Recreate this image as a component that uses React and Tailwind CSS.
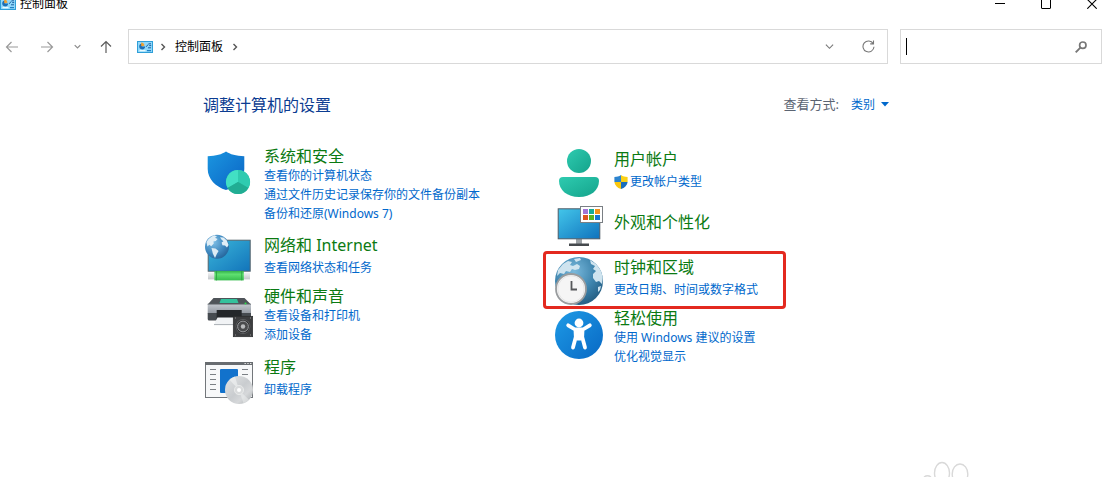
import { useState } from 'react';

function PanelIcon() {
  return (
    <svg width="16" height="12" viewBox="0 0 16 12" aria-hidden="true" className="shrink-0">
      <rect x="0.5" y="0.5" width="15" height="11" fill="#8fd8fb" stroke="#2f9fd8" />
      <path d="M5.2 2.4A3 3 0 1 0 8.2 5.6H5.2Z" fill="#1d6fb5" />
      <path d="M4.2 1.6A3 3 0 0 1 7.4 4.8L4.2 5.2Z" fill="#f0a030" />
      <path d="M9.2 5.8 11.2 3.4M11.5 2.8h2.5M12.2 4.6h2M11 6.8h3" stroke="#1c5f9e" strokeWidth="1" />
      <path d="M2.5 9.6h6" stroke="#e9fbff" strokeWidth="1.4" />
      <path d="M10 9.6h4" stroke="#1f7fc4" strokeWidth="1.2" />
    </svg>
  );
}

function Chevron({ dir = 'right', size = 8, color = '#555', width = 1.4 }) {
  return (
    <svg width={size} height={size} viewBox="0 0 8 8" fill="none" stroke={color} strokeWidth={width} aria-hidden="true">
      <path d={dir === 'right' ? 'M2.5 1 5.5 4 2.5 7' : 'M0.8 2.4 4 5.6 7.2 2.4'} />
    </svg>
  );
}

function Arrow({ d, color }) {
  return (
    <svg width="14" height="14" viewBox="0 0 14 14" fill="none" stroke={color} strokeWidth="1.2" aria-hidden="true">
      <path d={d} />
    </svg>
  );
}

function UacShield() {
  return (
    <svg width="14" height="14" viewBox="0 0 14 14" aria-hidden="true" className="shrink-0">
      <path d="M7 0C5 1.4 3 1.9 0.4 2V7H7Z" fill="#2d84cf" />
      <path d="M7 0C9 1.4 11 1.9 13.6 2V7H7Z" fill="#fbd116" />
      <path d="M0.4 7C0.7 10.4 3.2 12.8 7 14V7Z" fill="#fbc80f" />
      <path d="M13.6 7C13.3 10.4 10.8 12.8 7 14V7Z" fill="#1c6ebb" />
    </svg>
  );
}

function SecurityIcon() {
  return (
    <svg width="48" height="48" viewBox="0 0 48 48" aria-hidden="true">
      <defs>
        <linearGradient id="sec" x1="0" y1="0" x2="1" y2="1">
          <stop offset="0" stopColor="#1b96e0" />
          <stop offset="1" stopColor="#0a63c4" />
        </linearGradient>
      </defs>
      <path d="M21 2.6C25 5.4 31 7 39.3 7.2V20C39.3 30 31 38 21 41C11 38 2.7 30 2.7 20V7.2C11 7 17 5.4 21 2.6Z" fill="url(#sec)" />
      <circle cx="33" cy="33" r="12" fill="#27b99d" />
      <path d="M33 33V21A12 12 0 0 0 22.6 39Z" fill="#42e0c4" />
      <path d="M33 33V21A12 12 0 0 1 43.4 39Z" fill="#2fcbb0" />
      <path d="M33 33 22.6 39A12 12 0 0 0 43.4 39Z" fill="#21ad93" />
    </svg>
  );
}

function NetworkIcon() {
  return (
    <svg width="48" height="48" viewBox="0 0 48 48" aria-hidden="true">
      <defs>
        <linearGradient id="netScreen" x1="0" y1="0" x2="1" y2="1">
          <stop offset="0" stopColor="#3bb6da" />
          <stop offset="1" stopColor="#1274ba" />
        </linearGradient>
        <radialGradient id="netGlobe" cx="0.35" cy="0.3" r="0.8">
          <stop offset="0" stopColor="#7fbfe6" />
          <stop offset="0.6" stopColor="#3d86bd" />
          <stop offset="1" stopColor="#215f94" />
        </radialGradient>
        <linearGradient id="netCable" x1="0" y1="0" x2="0" y2="1">
          <stop offset="0" stopColor="#34b24a" />
          <stop offset="0.35" stopColor="#5fe070" />
          <stop offset="1" stopColor="#37bd4d" />
        </linearGradient>
        <linearGradient id="netPlug" x1="0" y1="0" x2="0" y2="1">
          <stop offset="0" stopColor="#f3f4f5" />
          <stop offset="1" stopColor="#c3c7ca" />
        </linearGradient>
      </defs>
      <rect x="3.2" y="7.2" width="42" height="31" fill="url(#netScreen)" stroke="#55636c" />
      <rect x="3" y="39.4" width="42" height="7" fill="url(#netPlug)" />
      <rect x="9.4" y="38" width="29.4" height="9.4" fill="url(#netCable)" />
      <path d="M11.5 38V47.4M36.7 38V47.4" stroke="#2c9d40" strokeWidth="0.8" />
      <circle cx="12" cy="13.8" r="12" fill="url(#netGlobe)" />
      <path d="M1.5 9C3.5 5.5 6.5 3 9.5 2.2L12 3.4 10 4.8 12.6 6 10.8 8 8.4 8.6 8.8 10.6 6.2 13.2 4.4 11.8 2.4 13.4Z" fill="#e0eef6" />
      <path d="M6.5 15 10.5 15.6 13.6 18 11.8 21 10 25 7.8 20.5Z" fill="#dcebf4" />
      <path d="M15 4.2 18.6 4.6 21.8 7.4 23.6 12 22 14.5 20 12.6 17.4 12.2 16.6 9.6 18.4 8.2 16.4 6.6Z" fill="#e0eef6" />
    </svg>
  );
}

function HardwareIcon() {
  return (
    <svg width="48" height="48" viewBox="0 0 48 48" aria-hidden="true">
      <defs>
        <linearGradient id="prn" x1="0" y1="0" x2="0" y2="1">
          <stop offset="0" stopColor="#c3c8cf" />
          <stop offset="1" stopColor="#9298a0" />
        </linearGradient>
      </defs>
      <path d="M8.5 5H39.5L46 11.5H2.7Z" fill="#4f5459" />
      <path d="M16 6H32L33.5 10H14.5Z" fill="#35c29d" />
      <rect x="2.7" y="11" width="43.3" height="9.5" fill="url(#prn)" />
      <path d="M2.7 11.2H46" stroke="#5f656a" strokeWidth="0.8" />
      <path d="M2.7 20H46V27.5H4.2A1.5 1.5 0 0 1 2.7 26Z" fill="#464b50" />
      <circle cx="40.5" cy="10.4" r="1" fill="#2be04a" />
      <rect x="11.7" y="17" width="25" height="9.5" fill="#24272a" />
      <path d="M12.5 24.5H35.5L39 31.5H9Z" fill="#f1f3f5" />
      <path d="M9 31.6H30" stroke="#a9afb4" strokeWidth="1" />
      <rect x="28.3" y="23.3" width="19.4" height="20.4" fill="#3c3d3f" stroke="#2a2b2c" strokeWidth="0.7" />
      <circle cx="38" cy="33.5" r="7.4" fill="#5b5d5f" />
      <circle cx="38" cy="33.5" r="6.6" fill="#2b2b2d" />
      <circle cx="38" cy="33.5" r="5.4" fill="#4a4b4d" stroke="#9a9c9f" strokeWidth="1" />
      <circle cx="38" cy="33.5" r="2.2" fill="#b9bbbd" />
      <path d="M30 25h0.8M45.2 25h0.8M30 42h0.8M45.2 42h0.8" stroke="#aaa" />
    </svg>
  );
}

function ProgramsIcon() {
  return (
    <svg width="48" height="48" viewBox="0 0 48 48" aria-hidden="true">
      <defs>
        <linearGradient id="disc" x1="0" y1="0" x2="1" y2="1">
          <stop offset="0" stopColor="#e3e5e6" />
          <stop offset="0.5" stopColor="#c9cccf" />
          <stop offset="0.7" stopColor="#d6d8da" />
          <stop offset="1" stopColor="#a6aaad" />
        </linearGradient>
      </defs>
      <rect x="0.5" y="4.5" width="47" height="35" fill="#f7f8f9" stroke="#73777b" />
      <rect x="0" y="4" width="48" height="3" fill="#686c70" />
      <path d="M39.5 5.5h1.4M42.3 5.5h1.4M45 5.5h1.4" stroke="#e4e4e4" />
      <path d="M5 11.5h6M5 16.5h6M5 21.5h6M5 26.5h6M5 31.5h6M37 11.5h6M37 16.5h6" stroke="#7b8085" />
      <rect x="15" y="11" width="18" height="24" rx="1" fill="#1272cc" />
      <circle cx="34" cy="32" r="14" fill="url(#disc)" />
      <path d="M34 32 24.5 21.7A14 14 0 0 1 30 18.6Z" fill="#f4f5f5" opacity="0.6" />
      <path d="M34 32 44 41.8A14 14 0 0 1 38.5 45.2Z" fill="#f0f1f1" opacity="0.5" />
      <circle cx="34" cy="32" r="4.6" fill="#d9dbdc" stroke="#eceded" strokeWidth="0.8" />
      <circle cx="34" cy="32" r="2" fill="#fff" />
    </svg>
  );
}

function UserIcon() {
  return (
    <svg width="48" height="48" viewBox="0 0 48 48" aria-hidden="true">
      <defs>
        <linearGradient id="usr" x1="0" y1="0" x2="1" y2="1">
          <stop offset="0" stopColor="#2ecbb0" />
          <stop offset="1" stopColor="#14a38b" />
        </linearGradient>
      </defs>
      <circle cx="24" cy="12" r="12" fill="url(#usr)" />
      <path d="M8 28H40A4 4 0 0 1 44 32C44 41 36 48 24 48C12 48 4 41 4 32A4 4 0 0 1 8 28Z" fill="url(#usr)" />
    </svg>
  );
}

function AppearanceIcon() {
  return (
    <svg width="48" height="48" viewBox="0 0 48 48" aria-hidden="true">
      <defs>
        <linearGradient id="app" x1="0" y1="0" x2="1" y2="1">
          <stop offset="0" stopColor="#43c6ea" />
          <stop offset="1" stopColor="#0f72bd" />
        </linearGradient>
      </defs>
      <rect x="21" y="36" width="6" height="5" fill="#9da2a6" />
      <rect x="14" y="40.5" width="20" height="2.5" fill="#45494d" />
      <rect x="3.2" y="5.8" width="41.6" height="30" fill="url(#app)" stroke="#4d5b66" />
      <rect x="25.5" y="3.5" width="22" height="16" fill="#fff" stroke="#7a7f84" />
      <rect x="28" y="6" width="5" height="5" fill="#a274d6" />
      <rect x="34" y="6" width="5" height="5" fill="#16ab98" />
      <rect x="40" y="6" width="5" height="5" fill="#f3911b" />
      <rect x="28" y="12" width="5" height="5" fill="#dd5420" />
      <rect x="34" y="12" width="5" height="5" fill="#5bb323" />
      <rect x="40" y="12" width="5" height="5" fill="#1676d2" />
    </svg>
  );
}

function ClockIcon() {
  return (
    <svg width="48" height="48" viewBox="0 0 48 48" aria-hidden="true">
      <defs>
        <radialGradient id="globe" cx="0.4" cy="0.3" r="0.75">
          <stop offset="0" stopColor="#79b9dc" />
          <stop offset="0.6" stopColor="#3c82ab" />
          <stop offset="1" stopColor="#235b80" />
        </radialGradient>
        <clipPath id="globeClip">
          <circle cx="24" cy="24" r="24" />
        </clipPath>
      </defs>
      <circle cx="24" cy="24" r="24" fill="url(#globe)" />
      <g clipPath="url(#globeClip)" fill="#cfe4ef">
        <path d="M3 13 8 7 13 4 17 5 15 8 18 9 22 7 25 9 24 12 20 13 17 12 15 15 11 14 9 17 5 16 2 19Z" />
        <path d="M19 2 25 1 26 3 21 5Z" />
        <path d="M35 3 41 7 46 13 48 20 47 27 44 24 41 25 38 21 38 17 41 14 38 12 40 9 36 7Z" />
        <path d="M43 30 46 29 45 33 43 35Z" />
      </g>
      <circle cx="16" cy="32" r="15" fill="#f5f5f5" stroke="#999c9e" strokeWidth="1.8" />
      <circle cx="16" cy="32" r="13.2" fill="none" stroke="#e2e2e2" strokeWidth="0.8" />
      <path d="M16.5 24V32.5H22" fill="none" stroke="#55575a" strokeWidth="1.8" />
    </svg>
  );
}

function AccessIcon() {
  return (
    <svg width="48" height="48" viewBox="0 0 48 48" aria-hidden="true">
      <defs>
        <linearGradient id="ease" x1="0" y1="0" x2="1" y2="1">
          <stop offset="0" stopColor="#1e9be6" />
          <stop offset="1" stopColor="#0868c4" />
        </linearGradient>
      </defs>
      <circle cx="24" cy="24" r="24" fill="url(#ease)" />
      <circle cx="24" cy="12" r="4.4" fill="#fff" />
      <path
        d="M13.2 14.3 20 18.5H28L34.8 14.3M20.5 19.5 20.8 26 18 36.6M27.5 19.5 27.2 26 30 36.6"
        fill="none"
        stroke="#fff"
        strokeWidth="3.8"
        strokeLinecap="round"
        strokeLinejoin="round"
      />
      <path d="M20 18H28V27L26 29.5H22L20 27Z" fill="#fff" />
    </svg>
  );
}

const leftItems = [
  {
    title: '系统和安全',
    icon: SecurityIcon,
    links: ['查看你的计算机状态', '通过文件历史记录保存你的文件备份副本', '备份和还原(Windows 7)'],
    iconClass: 'pt-0.5',
  },
  { title: '网络和 Internet', icon: NetworkIcon, links: ['查看网络状态和任务'], className: 'mt-2.5', textClass: 'pt-[3px] gap-[3px]' },
  { title: '硬件和声音', icon: HardwareIcon, links: ['查看设备和打印机', '添加设备'], className: 'mt-1.5', iconClass: 'pt-1.5' },
  { title: '程序', icon: ProgramsIcon, links: ['卸载程序'], className: 'mt-3.5', textClass: 'gap-[3px]' },
];

const rightItems = [
  { title: '用户帐户', icon: UserIcon, links: ['更改帐户类型'], shield: true, className: 'mt-0.5', textClass: 'pt-px gap-[3px]' },
  { title: '外观和个性化', icon: AppearanceIcon, links: [], className: 'mt-1.5', textClass: 'pt-2.5' },
  { title: '时钟和区域', icon: ClockIcon, links: ['更改日期、时间或数字格式'], marked: true, className: 'mt-1.5', textClass: 'pt-px gap-[3px]' },
  { title: '轻松使用', icon: AccessIcon, links: ['使用 Windows 建议的设置', '优化视觉显示'], className: 'mt-1', iconClass: 'pt-0.5' },
];

function Category({ item }) {
  const Icon = item.icon;
  return (
    <section className={`relative flex gap-[11px] ${item.className || ''}`}>
      <div className={`shrink-0 ${item.iconClass || ''}`}>
        <Icon />
      </div>
      <div className={`flex flex-col items-start ${item.textClass || ''}`}>
        <h2 className="text-base leading-[19px]">
          <a href="#" className="text-[#0b7a12] hover:underline">{item.title}</a>
        </h2>
        {item.links.length > 0 && (
          <ul className="text-xs leading-[19px]">
            {item.links.map((link) => (
              <li key={link}>
                <a href="#" className="flex items-center gap-0.5 whitespace-nowrap text-[#0068cc] hover:underline">
                  {item.shield && <UacShield />}
                  {link}
                </a>
              </li>
            ))}
          </ul>
        )}
      </div>
      {item.marked && (
        <div className="pointer-events-none absolute -top-1.5 -bottom-1 -left-3 w-[243px] rounded-sm border-3 border-[#e3291f]" />
      )}
    </section>
  );
}

export default function App() {
  const [query, setQuery] = useState('');

  return (
    <div className="flex min-h-screen flex-col overflow-hidden bg-white font-['Noto_Sans','Noto_Sans_CJK_SC',sans-serif] text-xs text-black">
      <header className="-mt-3 flex h-8 items-center justify-between">
        <div className="flex items-center gap-1">
          <PanelIcon />
          <span>控制面板</span>
        </div>
        <div className="flex items-center gap-9 pr-3">
          <button type="button" aria-label="最小化">
            <svg width="10" height="10" viewBox="0 0 10 10" stroke="#000" aria-hidden="true"><path d="M0 4.5H10" /></svg>
          </button>
          <button type="button" aria-label="最大化">
            <svg width="10" height="10" viewBox="0 0 10 10" fill="none" stroke="#000" aria-hidden="true"><rect x="0.5" y="0.5" width="9" height="9" rx="0.5" /></svg>
          </button>
          <button type="button" aria-label="关闭">
            <svg width="10" height="10" viewBox="0 0 10 10" stroke="#000" strokeWidth="1.1" aria-hidden="true"><path d="M0.3 0.3 9.7 9.7M9.7 0.3 0.3 9.7" /></svg>
          </button>
        </div>
      </header>

      <div className="mt-[9px] flex items-center gap-3 pr-[7px] pl-[5px]">
        <nav className="flex shrink-0 items-center">
          <button type="button" aria-label="后退"><Arrow color="#9a9a9a" d="M13 7H1.5M6.5 2 1.5 7 6.5 12" /></button>
          <button type="button" aria-label="前进" className="ml-[21px]"><Arrow color="#9a9a9a" d="M1 7H12.5M7.5 2 12.5 7 7.5 12" /></button>
          <button type="button" aria-label="最近的位置" className="ml-5"><Chevron dir="down" size={7} color="#8c8c8c" /></button>
          <button type="button" aria-label="上移" className="ml-[18px]"><Arrow color="#5c5c5c" d="M7 13V1.5M2 6.5 7 1.5 12 6.5" /></button>
        </nav>
        <div className="ml-[3px] flex h-[35px] flex-1 items-center border border-[#d9d9d9] pr-3 pl-2">
          <PanelIcon />
          <span className="ml-1.5"><Chevron /></span>
          <button type="button" className="ml-2">控制面板</button>
          <span className="ml-2"><Chevron /></span>
          <button type="button" aria-label="以前的位置" className="ml-auto"><Chevron dir="down" size={9} color="#777" width={1} /></button>
          <button type="button" aria-label="刷新" className="ml-7">
            <svg width="13" height="13" viewBox="0 0 13 13" fill="none" stroke="#777" strokeWidth="1.1" aria-hidden="true">
              <path d="M11.2 3.6A5.5 5.5 0 1 0 12 6.8M11.5 0.6V3.9H8.2" />
            </svg>
          </button>
        </div>
        <div className="flex h-[35px] w-[202px] items-center border border-[#d9d9d9] pr-3.5 pl-[5px]">
          <span className="h-[17px] w-px shrink-0 bg-black" />
          <input
            type="text"
            aria-label="搜索控制面板"
            value={query}
            onChange={(e) => setQuery(e.target.value)}
            className="min-w-0 flex-1 bg-transparent outline-none"
          />
          <button type="button" aria-label="搜索">
            <svg width="12" height="12" viewBox="0 0 12 12" fill="none" stroke="#777" aria-hidden="true">
              <circle cx="7.8" cy="4.2" r="3.2" strokeWidth="1.7" />
              <path d="M5.4 6.6 0.7 11.3" strokeWidth="1.9" />
            </svg>
          </button>
        </div>
      </div>

      <main className="pt-[29px] pr-[17px]">
        <div className="mx-auto max-w-[686px]">
          <div className="flex items-center justify-between">
            <h1 className="text-base leading-6 text-[#0b3c91]">调整计算机的设置</h1>
            <div className="flex items-center gap-3">
              <span className="text-[13px] text-[#5b6472]">查看方式:</span>
              <button type="button" className="flex items-center gap-1.5 text-[#0068cc]">
                类别
                <svg width="8" height="5" viewBox="0 0 8 5" fill="#0068cc" aria-hidden="true"><path d="M0 0H8L4 4.5Z" /></svg>
              </button>
            </div>
          </div>
          <div className="mt-[30px] grid grid-cols-[350px_1fr] pl-0.5">
            <div>
              {leftItems.map((item) => <Category key={item.title} item={item} />)}
            </div>
            <div>
              {rightItems.map((item) => <Category key={item.title} item={item} />)}
            </div>
          </div>
        </div>
      </main>

      <footer className="mt-auto flex justify-end pr-[138px]">
        <svg width="48" height="16" viewBox="0 0 48 16" fill="none" stroke="#d9d9d9" strokeWidth="1.4" aria-hidden="true">
          <path d="M1 16C3 14.6 6 14.6 8 16" />
          <ellipse cx="19" cy="12" rx="7.5" ry="10.5" />
          <ellipse cx="37" cy="13" rx="7.8" ry="10" />
        </svg>
      </footer>
    </div>
  );
}
